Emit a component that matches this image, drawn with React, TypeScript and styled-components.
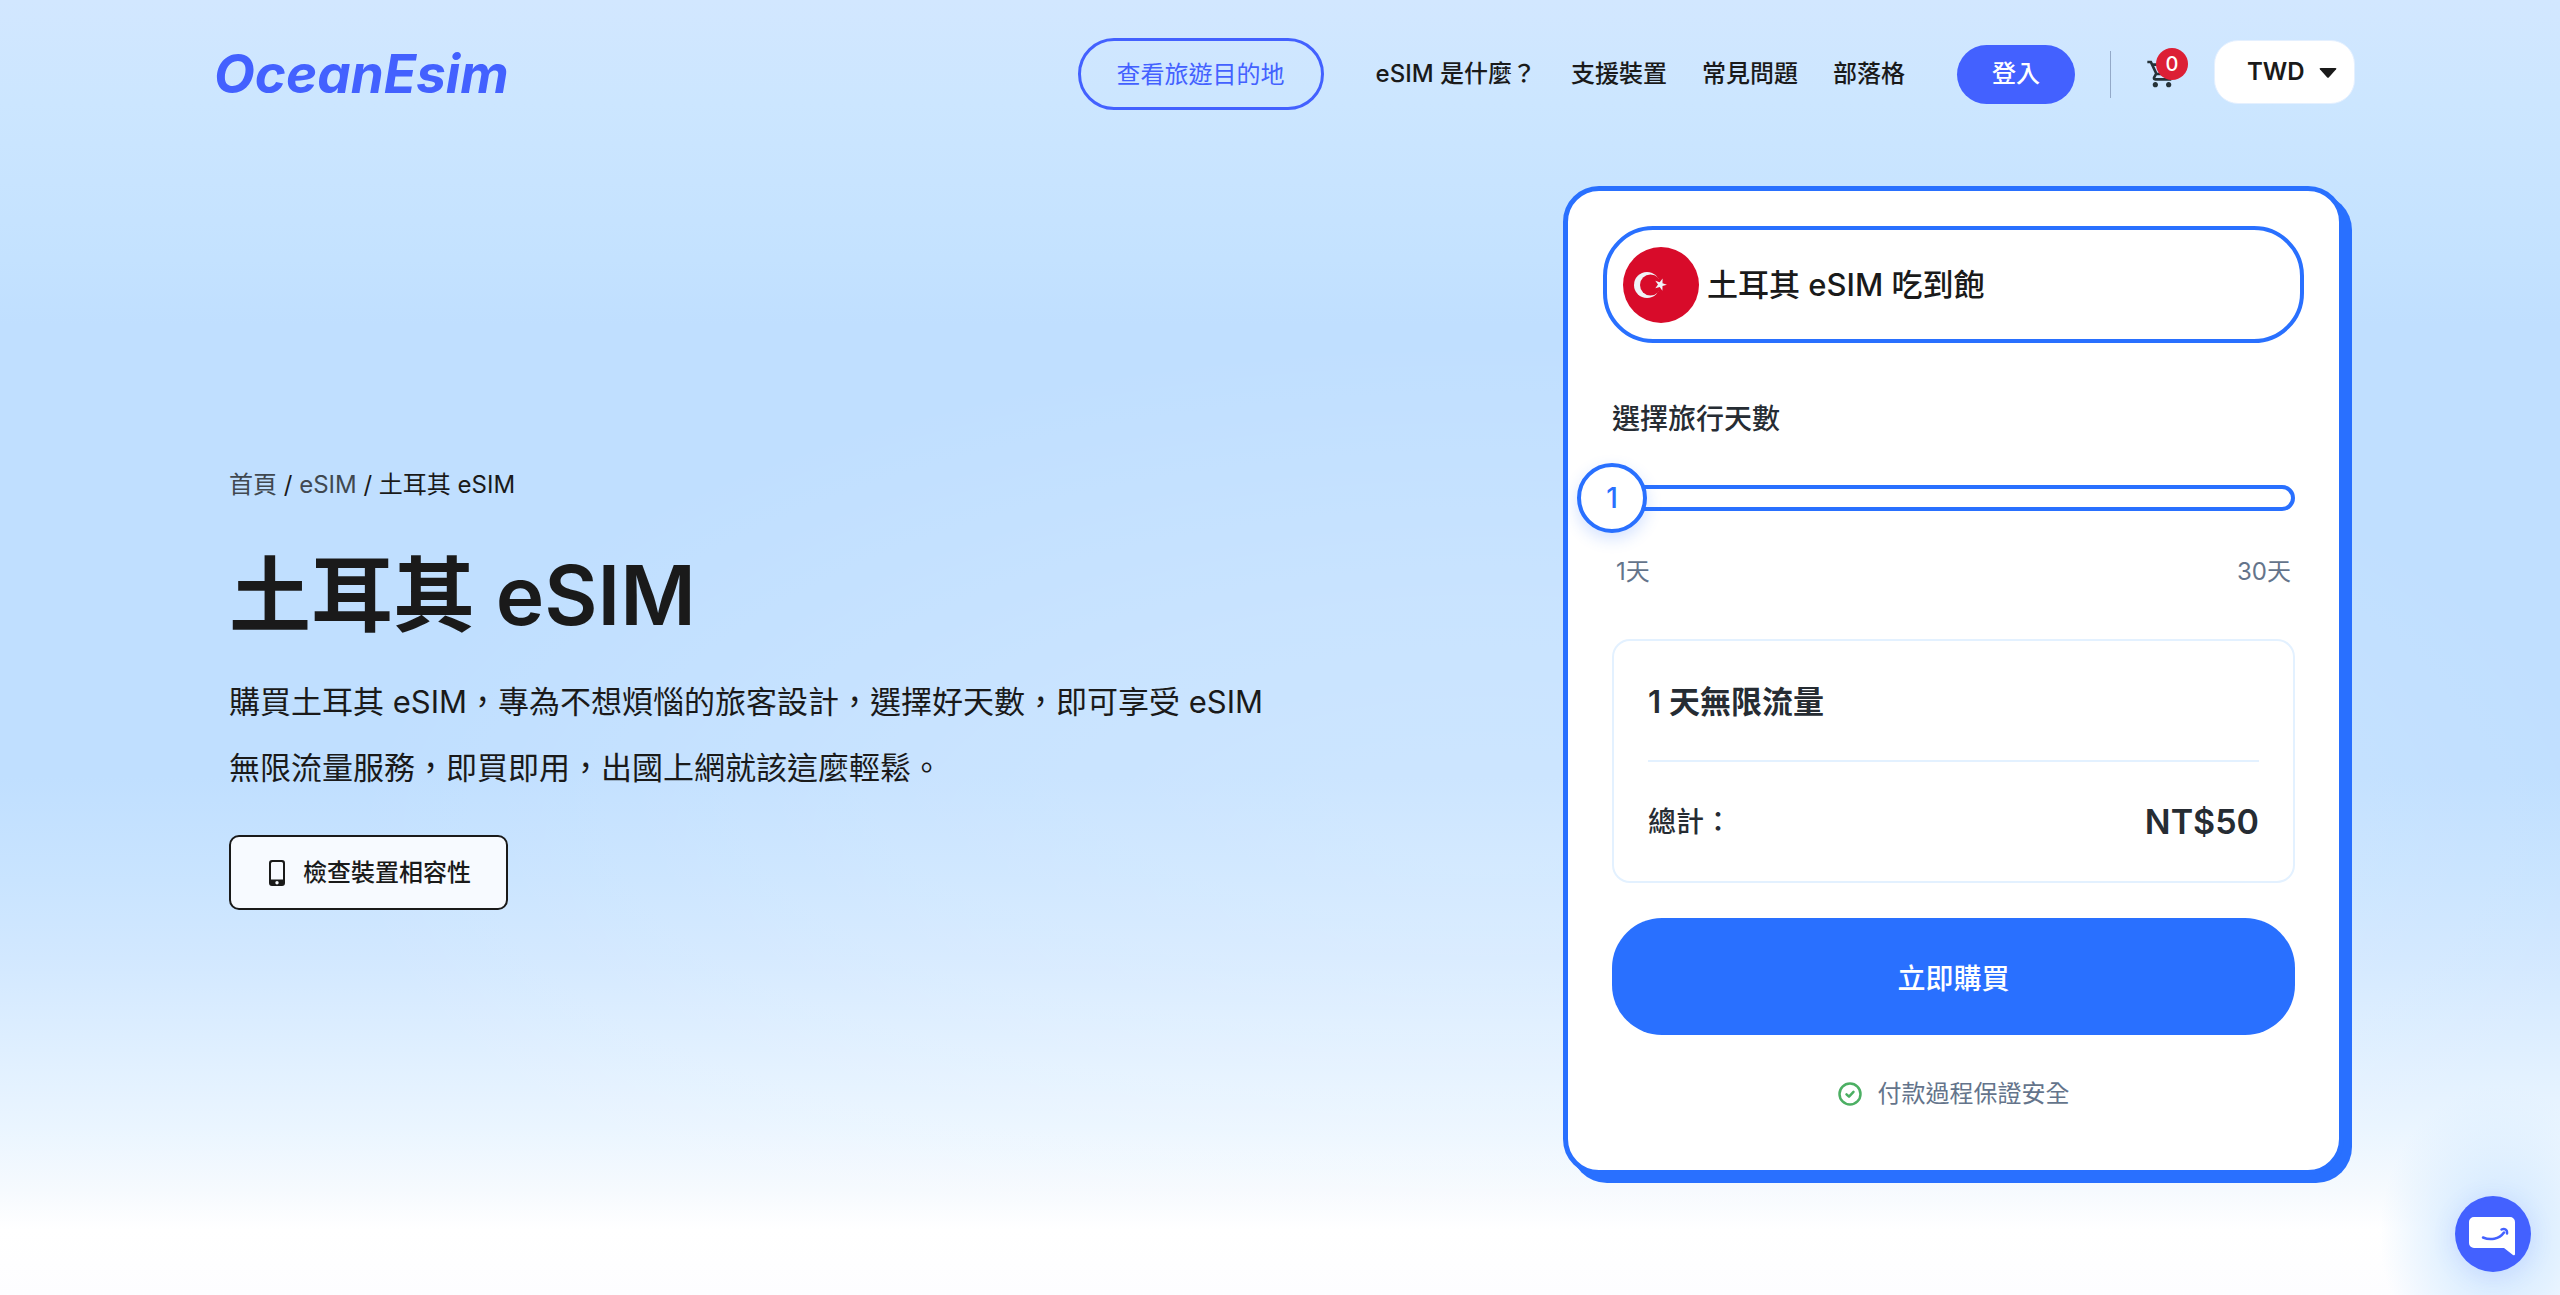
import React, { useState } from "react";
import styled, { createGlobalStyle } from "styled-components";

const ink = "#1a1a1a";
const indigo = "#4361ff";
const azure = "#2970ff";
const slate = "#64748b";

const GlobalStyle = createGlobalStyle`
  *, *::before, *::after { box-sizing: border-box; }
  body {
    margin: 0;
    color: ${ink};
    font-family: Inter, "Noto Sans CJK TC", sans-serif;
    font-size: 24px;
    line-height: 36px;
  }
  a { color: inherit; text-decoration: none; }
  button, select, input { font: inherit; color: inherit; margin: 0; }
  button { cursor: pointer; }
`;

const Page = styled.div`
  min-height: 100vh;
  display: flex;
  flex-direction: column;
  background:
    radial-gradient(ellipse 120px 150px at calc(100% - 60px) calc(100% - 60px), #cfe6ff 0%, #dceeffcc 50%, #dceeff00 100%),
    radial-gradient(ellipse 45% 40% at 58% 66%, #ffffff38 0%, #ffffff24 50%, #ffffff00 100%),
    linear-gradient(180deg, #d2e7ff 0%, #cce6ff 8%, #c4e2ff 20%, #c0dfff 25%, #c0dfff 60%, #c9e4ff 68%, #d2e8ff 74%, #ddeeff 80%, #eaf5ff 87%, #f6fafe 92%, #ffffff 95%, #fdfdff 100%);
`;

const Header = styled.header`
  display: flex;
  align-items: center;
  justify-content: space-between;
  padding: 38px 205px 0 214px;
`;

const Logo = styled.a`
  color: ${indigo};
  font-size: 53px;
  font-style: italic;
  font-weight: 700;
  line-height: 72px;
`;

const Nav = styled.nav`
  display: flex;
  align-items: center;
`;

const OutlineLink = styled.a`
  padding: 16px 36px 14px;
  border: 3px solid ${indigo};
  border-radius: 36px;
  color: ${indigo};
  margin-right: 52px;
`;

const Menu = styled.ul`
  display: flex;
  gap: 35px;
  margin: 0 52px 0 0;
  padding: 0;
  list-style: none;
  font-weight: 500;
`;

const LoginButton = styled.button`
  height: 59px;
  padding: 0 35px;
  border: 0;
  border-radius: 30px;
  background: ${indigo};
  color: #fff;
  font-weight: 500;
`;

const Divider = styled.span`
  width: 1px;
  height: 47px;
  margin: 0 35px;
  background: #93a9c8;
`;

const CartButton = styled.button`
  position: relative;
  display: flex;
  width: 32px;
  height: 32px;
  margin-right: 36px;
  padding: 0;
  border: 0;
  background: none;
`;

const Badge = styled.span`
  position: absolute;
  top: -10px;
  left: 10px;
  width: 32px;
  height: 32px;
  border-radius: 50%;
  background: #dc1f35;
  color: #fff;
  font-size: 20px;
  font-weight: 500;
  line-height: 32px;
  text-align: center;
`;

const Currency = styled.label`
  position: relative;
  display: flex;
  margin-bottom: 4px;
  svg {
    position: absolute;
    right: 18px;
    top: 28px;
    pointer-events: none;
  }
`;

const CurrencySelect = styled.select`
  appearance: none;
  width: 141px;
  height: 64px;
  padding: 0 32px;
  border: 1px solid #e4f0ff;
  border-radius: 24px;
  background: #fff;
  font-weight: 600;
`;

const Hero = styled.main`
  flex: 1;
  display: flex;
  align-items: center;
  justify-content: space-between;
  gap: 80px;
  padding: 76px 216px 120px 229px;
`;

const Intro = styled.section`
  width: 1040px;
`;

const Breadcrumb = styled.nav`
  margin-top: 16px;
  a { color: #404850; }
`;

const Title = styled.h1`
  margin: 44px 0 24px;
  font-size: 82px;
  font-weight: 600;
  line-height: 98px;
`;

const Lead = styled.p`
  margin: 0 0 34px;
  font-size: 31px;
  line-height: 66px;
`;

const CheckButton = styled.button`
  display: inline-flex;
  align-items: center;
  gap: 18px;
  height: 75px;
  padding: 0 35px 0 38px;
  border: 2px solid ${ink};
  border-radius: 10px;
  background: #f7faff;
  font-weight: 500;
`;

const Card = styled.section`
  width: 781px;
  padding: 35px;
  border: 5px solid ${azure};
  border-radius: 36px;
  background: #fff;
  box-shadow: 8px 8px 0 ${azure};
  color: #262c33;
`;

const CountryButton = styled.button`
  display: flex;
  align-items: center;
  gap: 8px;
  width: 100%;
  height: 117px;
  padding: 0 16px;
  border: 4px solid ${azure};
  border-radius: 50px;
  background: #fff;
  color: ${ink};
  font-size: 31px;
  font-weight: 500;
`;

const CardBody = styled.div`
  padding: 0 9px;
`;

const DaysLabel = styled.label`
  display: block;
  margin-top: 56px;
  font-size: 28px;
  line-height: 40px;
  font-weight: 500;
`;

const Slider = styled.div`
  position: relative;
  display: flex;
  align-items: center;
  height: 70px;
  margin-top: 24px;
`;

const Track = styled.div`
  flex: 1;
  height: 26px;
  border: 4px solid ${azure};
  border-radius: 13px;
`;

const Range = styled.input`
  position: absolute;
  left: -35px;
  width: calc(100% + 70px);
  height: 70px;
  appearance: none;
  background: none;
  &::-webkit-slider-thumb {
    appearance: none;
    width: 70px;
    height: 70px;
    border: 4px solid ${azure};
    border-radius: 50%;
    background: #fff;
    box-shadow: 0 6px 16px #2970ff33;
  }
`;

const ThumbValue = styled.output`
  position: absolute;
  width: 70px;
  margin-left: -35px;
  color: ${azure};
  font-size: 28px;
  line-height: 40px;
  font-weight: 500;
  text-align: center;
  pointer-events: none;
`;

const Scale = styled.div`
  display: flex;
  justify-content: space-between;
  margin: 21px 4px 49px;
  color: ${slate};
`;

const Summary = styled.div`
  padding: 0 34px;
  border: 2px solid #e3f1ff;
  border-radius: 18px;
`;

const Plan = styled.h2`
  margin: 0;
  padding: 38px 0 35px;
  border-bottom: 2px solid #e3f1ff;
  font-size: 31px;
  font-weight: 600;
  line-height: 46px;
`;

const Total = styled.div`
  display: flex;
  align-items: center;
  justify-content: space-between;
  height: 119px;
  font-size: 28px;
  font-weight: 500;
  strong {
    font-size: 34px;
    font-weight: 600;
  }
`;

const BuyButton = styled.button`
  width: 100%;
  height: 117px;
  margin: 35px 0 41px;
  padding: 4px 0 0;
  border: 0;
  border-radius: 50px;
  background: ${azure};
  color: #fff;
  font-size: 28px;
  font-weight: 500;
`;

const Secure = styled.p`
  display: flex;
  align-items: center;
  justify-content: center;
  gap: 16px;
  margin: 0 0 23px;
  color: ${slate};
`;

const ChatButton = styled.button`
  position: fixed;
  right: 29px;
  bottom: 23px;
  width: 76px;
  height: 76px;
  padding: 0;
  border: 0;
  border-radius: 50%;
  background: ${indigo};
  box-shadow: 0 4px 24px #4361ff22;
`;

const CartIcon = () => (
  <svg width="32" height="32" viewBox="0 0 24 24" fill="#263238" aria-hidden="true">
    <path d="M15.55 13c.75 0 1.41-.41 1.75-1.03l3.58-6.49A.996.996 0 0 0 20.01 4H5.21l-.94-2H1v2h2l3.6 7.59-1.35 2.44C4.52 15.37 5.48 17 7 17h12v-2H7l1.1-2h7.45zM6.16 6h12.15l-2.76 5H8.53L6.16 6zM7 18c-1.1 0-1.99.9-1.99 2S5.9 22 7 22s2-.9 2-2-.9-2-2-2zm10 0c-1.1 0-1.99.9-1.99 2s.89 2 1.99 2 2-.9 2-2-.9-2-2-2z" />
  </svg>
);

const PhoneIcon = () => (
  <svg width="16" height="26" viewBox="0 0 16 26" fill={ink} aria-hidden="true">
    <path fillRule="evenodd" d="M3 0h10a3 3 0 0 1 3 3v20a3 3 0 0 1-3 3H3a3 3 0 0 1-3-3V3a3 3 0 0 1 3-3zm-1 3.5v16h12v-16A1.500 1.500 0 0 0 12.500 2h-9A1.500 1.500 0 0 0 2 3.500zM8 21a1.700 1.700 0 1 0 0 3.400A1.700 1.700 0 0 0 8 21z" />
  </svg>
);

const TurkeyFlag = () => (
  <svg width="76" height="76" viewBox="0 0 76 76" aria-hidden="true">
    <circle cx="38" cy="38" r="38" fill="#d80b2a" />
    <circle cx="24" cy="38" r="13" fill="#f0f4f8" />
    <circle cx="27.500" cy="38" r="10.500" fill="#d80b2a" />
    <path fill="#f0f4f8" d="M39.600 31.600l-.1 4.600 4.400 1.500-4.400 1.400-.1 4.600-2.700-3.700-4.400 1.300 2.700-3.800-2.700-3.700 4.400 1.400z" />
  </svg>
);

const CheckIcon = () => (
  <svg width="24" height="24" viewBox="0 0 24 24" fill="none" stroke="#4caf63" strokeWidth="2.500" strokeLinecap="round" strokeLinejoin="round" aria-hidden="true">
    <circle cx="12" cy="12" r="10.500" />
    <path d="M8.500 12.300l2.500 2.400 4.500-4.900" />
  </svg>
);

const ChatIcon = () => (
  <svg width="76" height="76" viewBox="0 0 76 76" aria-hidden="true">
    <path fill="#fff" d="M19 21h36a5 5 0 0 1 5 5v32q0 2-2 1l-9-7H19a5 5 0 0 1-5-5V26a5 5 0 0 1 5-5z" />
    <path fill="none" stroke={indigo} strokeWidth="2.500" strokeLinecap="round" d="M28 41.500c7 3 16 2 21-5M46.500 33.500c3-1.500 6 0 5.500 4" />
  </svg>
);

const menu = ["eSIM 是什麼？", "支援裝置", "常見問題", "部落格"];
const MIN = 1;
const MAX = 30;

export default function App() {
  const [days, setDays] = useState(1);
  return (
    <Page>
      <GlobalStyle />
      <Header>
        <Logo href="#">OceanEsim</Logo>
        <Nav>
          <OutlineLink href="#destinations">查看旅遊目的地</OutlineLink>
          <Menu>
            {menu.map((item) => (
              <li key={item}>
                <a href="#menu">{item}</a>
              </li>
            ))}
          </Menu>
          <LoginButton type="button">登入</LoginButton>
          <Divider />
          <CartButton type="button" aria-label="購物車">
            <CartIcon />
            <Badge>0</Badge>
          </CartButton>
          <Currency>
            <CurrencySelect aria-label="幣別" defaultValue="TWD">
              <option>TWD</option>
            </CurrencySelect>
            <svg width="18" height="10" viewBox="0 0 18 10" fill={ink} aria-hidden="true">
              <path d="M1.500 0h15q1.500 0 .6 1.200L10 9.200q-1 1-2 0L.9 1.200Q0 0 1.500 0z" />
            </svg>
          </Currency>
        </Nav>
      </Header>

      <Hero>
        <Intro>
          <Breadcrumb aria-label="麵包屑">
            <a href="#home">首頁</a> / <a href="#esim">eSIM</a> / <span>土耳其 eSIM</span>
          </Breadcrumb>
          <Title>土耳其 eSIM</Title>
          <Lead>購買土耳其 eSIM，專為不想煩惱的旅客設計，選擇好天數，即可享受 eSIM 無限流量服務，即買即用，出國上網就該這麼輕鬆。</Lead>
          <CheckButton type="button">
            <PhoneIcon />
            檢查裝置相容性
          </CheckButton>
        </Intro>

        <Card>
          <CountryButton type="button">
            <TurkeyFlag />
            土耳其 eSIM 吃到飽
          </CountryButton>
          <CardBody>
            <DaysLabel htmlFor="days">選擇旅行天數</DaysLabel>
            <Slider>
              <Track />
              <Range
                id="days"
                type="range"
                min={MIN}
                max={MAX}
                value={days}
                onChange={(event) => setDays(Number(event.target.value))}
              />
              <ThumbValue htmlFor="days" style={{ left: `${((days - MIN) / (MAX - MIN)) * 100}%` }}>
                {days}
              </ThumbValue>
            </Slider>
            <Scale>
              <span>1天</span>
              <span>30天</span>
            </Scale>
            <Summary>
              <Plan>{days} 天無限流量</Plan>
              <Total>
                <span>總計：</span>
                <strong>NT$50</strong>
              </Total>
            </Summary>
            <BuyButton type="button">立即購買</BuyButton>
            <Secure>
              <CheckIcon />
              付款過程保證安全
            </Secure>
          </CardBody>
        </Card>
      </Hero>

      <ChatButton type="button" aria-label="客服">
        <ChatIcon />
      </ChatButton>
    </Page>
  );
}
